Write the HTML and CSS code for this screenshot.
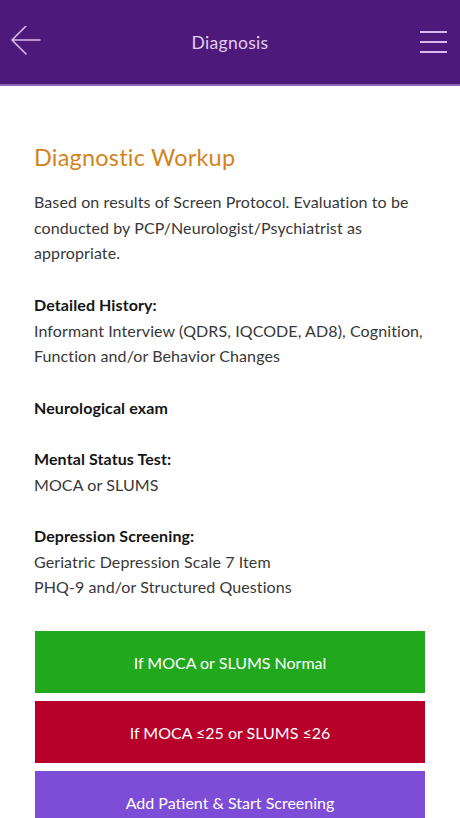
FILE: index.html
```html
<!DOCTYPE html>
<html>
<head>
<meta charset="utf-8">
<link rel="stylesheet" href="styles.css">
</head>
<body>
<header class="topbar">
  <svg class="back" width="32" height="32" viewBox="0 0 32 32">
    <path d="M1 14 H29 M15 0 L1 14 L15 28" fill="none" stroke="#d9b9ef" stroke-width="1.6" stroke-linecap="round" stroke-linejoin="round"/>
  </svg>
  <div class="title">Diagnosis</div>
  <svg class="menu" width="28" height="24" viewBox="0 0 28 24">
    <path d="M0 2 H27 M0 12 H27 M0 22 H27" fill="none" stroke="#d9b9ef" stroke-width="1.8"/>
  </svg>
</header>
<main class="content">
  <h1 class="heading">Diagnostic Workup</h1>
  <div class="body">
    <p>Based on results of Screen Protocol. Evaluation to be conducted by PCP/Neurologist/Psychiatrist as appropriate.</p>
    <p><b>Detailed History:</b><br>Informant Interview (QDRS, IQCODE, AD8), Cognition, Function and/or Behavior Changes</p>
    <p><b>Neurological exam</b></p>
    <p><b>Mental Status Test:</b><br>MOCA or SLUMS</p>
    <p><b>Depression Screening:</b><br>Geriatric Depression Scale 7 Item<br>PHQ-9 and/or Structured Questions</p>
  </div>
  <div class="buttons">
    <div class="btn green">If MOCA or SLUMS Normal</div>
    <div class="btn red">If MOCA ≤25 or SLUMS ≤26</div>
    <div class="btn purple">Add Patient &amp; Start Screening</div>
  </div>
</main>
</body>
</html>
```
FILE: styles.css
```css
* { box-sizing: border-box; }
html, body { margin: 0; padding: 0; }
body {
  width: 460px;
  height: 818px;
  overflow: hidden;
  background: #ffffff;
  font-family: Lato, "Open Sans", sans-serif;
}
.topbar {
  height: 86px;
  background: #4d1a7b;
  border-bottom: 2px solid #8f64b4;
  display: flex;
  align-items: center;
  justify-content: space-between;
  padding: 0 12px 0 11px;
  position: relative;
}
.back { display: block; }
.menu { display: block; }
.title {
  position: absolute;
  left: 0; right: 0;
  text-align: center;
  color: #e2cdf2;
  font-size: 17.5px;
  letter-spacing: 0.3px;
  top: 32px;
  pointer-events: none;
}
.content {
  padding: 0 35px 0 34px;
}
.heading {
  margin: 54px 0 0 0;
  font-weight: 400;
  font-size: 23.5px;
  color: #d4831c;
  line-height: 34px;
  letter-spacing: 0.2px;
}
.body {
  margin-top: 15px;
  font-size: 16px;
  line-height: 25.7px;
  color: #383838;
  letter-spacing: 0.1px;
}
.body p { margin: 0 0 25.7px 0; }
.body b { font-weight: 700; color: #151515; }
.buttons {
  margin-top: 31px;
  margin-left: 1px;
  display: flex;
  flex-direction: column;
  gap: 8px;
}
.btn {
  height: 62px;
  display: flex;
  align-items: center;
  justify-content: center;
  color: #ffffff;
  font-size: 16px;
}
.green { background: #21a81c; }
.red { background: #b7002a; }
.purple { background: #7e4dd8; }
```
